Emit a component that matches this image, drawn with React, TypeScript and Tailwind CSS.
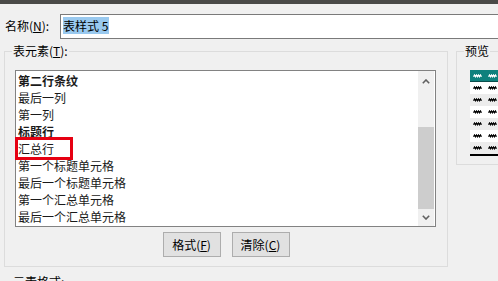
const FONT = "font-['Microsoft_YaHei','Noto_Sans_CJK_SC',sans-serif]";

const ITEMS: { label: string; bold?: boolean }[] = [
  { label: "第二行条纹", bold: true },
  { label: "最后一列" },
  { label: "第一列" },
  { label: "标题行", bold: true },
  { label: "汇总行" },
  { label: "第一个标题单元格" },
  { label: "最后一个标题单元格" },
  { label: "第一个汇总单元格" },
  { label: "最后一个汇总单元格" },
];

function Scribble({ light }: { light?: boolean }) {
  return (
    <svg width="9" height="4" viewBox="0 0 9 4" className="block">
      <path
        d="M0.5 2.8 L1.5 1 L2.5 2.8 L3.5 1 L4.5 2.8 L5.5 1 L6.5 2.8 L7.5 1 L8.5 2.8"
        fill="none"
        stroke={light ? "#ffffff" : "#000000"}
        strokeWidth="1.2"
      />
    </svg>
  );
}

function Chevron({ up }: { up?: boolean }) {
  return (
    <svg width="8" height="5" viewBox="0 0 8 5">
      <polyline
        points={up ? "0.8,4.2 4,1 7.2,4.2" : "0.8,0.8 4,4 7.2,0.8"}
        fill="none"
        stroke="#606060"
        strokeWidth="1.6"
      />
    </svg>
  );
}

function PreviewTable() {
  const rows = [0, 1, 2, 3, 4, 5];
  return (
    <div className="ml-[13px] mt-[12px] w-[40px] border-b-2 border-black">
      <div className="flex h-[12px] border-b border-[#0b4f4d] bg-[#0f817d]">
        {[0, 1].map((c) => (
          <div key={c} className="flex w-[15px] items-center justify-center">
            <Scribble light />
          </div>
        ))}
      </div>
      {rows.map((r) => (
        <div
          key={r}
          className={
            r % 2 === 0 ? "flex h-[12px] bg-white" : "flex h-[12px] bg-[#ececec]"
          }
        >
          {[0, 1].map((c) => (
            <div key={c} className="flex w-[15px] items-center justify-center">
              <Scribble />
            </div>
          ))}
        </div>
      ))}
    </div>
  );
}

export default function App() {
  return (
    <div
      className={`relative h-[281px] w-[498px] overflow-hidden bg-[#f0f0f0] text-[12px] text-black ${FONT}`}
    >
      <div className="h-[4px] bg-[#4a4a48]" />

      {/* 名称 */}
      <div className="mt-[10px] flex h-[25px]">
        <div className="w-[60px] shrink-0 pl-[5px] pt-[4px] leading-[15px]">
          名称(<span className="underline">N</span>):
        </div>
        <div className="flex-1 border border-r-0 border-[#7a7a7a] bg-white pl-[2px] pt-[2px]">
          <span className="inline-block bg-[#99c9ef] pr-[1px] leading-[17px]">
            表样式 5
          </span>
        </div>
      </div>

      <div className="mt-[5px] flex items-start">
        {/* 表元素 */}
        <fieldset className="ml-[4px] w-[444px] shrink-0 border border-[#dcdcdc] pb-[9px]">
          <legend className="ml-[7px] px-[1px] leading-[14px]">
            表元素(<span className="underline">T</span>):
          </legend>
          <div className="relative ml-[10px] mt-[12px] flex h-[157px] w-[421px] border border-[#828282] bg-white">
            <ul className="w-[402px] pl-[2px] pt-[1px] text-[#1a1a1a]">
              {ITEMS.map((it) => (
                <li
                  key={it.label}
                  className={
                    it.bold
                      ? "h-[17px] font-bold leading-[17px]"
                      : "h-[17px] leading-[17px]"
                  }
                >
                  {it.label}
                </li>
              ))}
            </ul>
            <div className="flex w-[16px] flex-col bg-[#f0f0f0]">
              <div className="flex h-[17px] items-center justify-center pt-[3px]">
                <Chevron up />
              </div>
              <div className="flex flex-1 flex-col justify-end">
                <div className="h-[82px] bg-[#cdcdcd]" />
              </div>
              <div className="flex h-[17px] items-center justify-center">
                <Chevron />
              </div>
            </div>
            {/* highlight marker */}
            <div className="absolute left-[-1px] top-[66px] h-[23px] w-[58px] border-[3px] border-[#e60012]" />
          </div>
          <div className="mt-[5px] flex justify-center gap-[11px]">
            <button
              type="button"
              className="h-[25px] w-[58px] border border-[#adadad] bg-[#e1e1e1] leading-[23px]"
            >
              格式(<span className="underline">F</span>)
            </button>
            <button
              type="button"
              className="h-[25px] w-[58px] border border-[#adadad] bg-[#e1e1e1] leading-[23px]"
            >
              清除(<span className="underline">C</span>)
            </button>
          </div>
        </fieldset>

        {/* 预览 */}
        <fieldset className="ml-[8px] w-[60px] shrink-0 border border-[#dcdcdc] pb-[8px]">
          <legend className="ml-[7px] px-[1px] leading-[14px]">预览</legend>
          <PreviewTable />
        </fieldset>
      </div>

      <div className="mt-[8px] pl-[13px] leading-[14px]">元素格式:</div>
    </div>
  );
}
